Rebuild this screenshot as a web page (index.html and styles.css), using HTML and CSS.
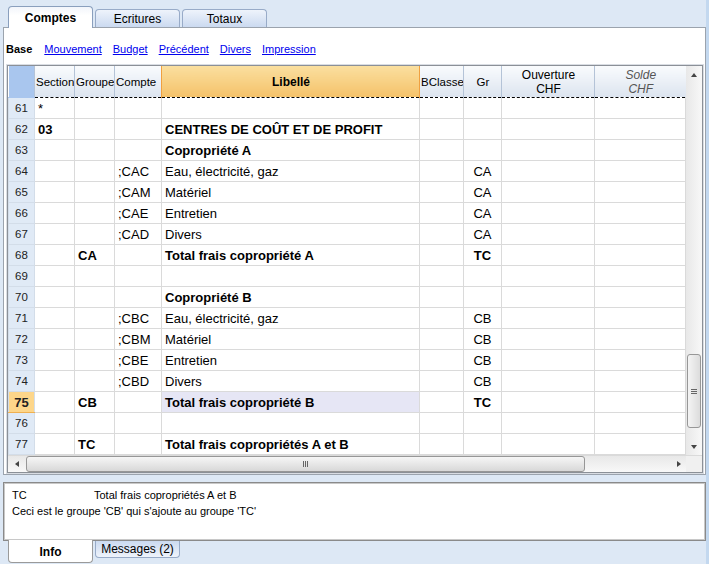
FILE: index.html
```html
<!DOCTYPE html>
<html>
<head>
    <meta charset="utf-8">
    <link rel="stylesheet" href="styles.css">
</head>
<body>
<div class="window">
    <div class="tabs">
        <div class="tab active">Comptes</div>
        <div class="tab">Ecritures</div>
        <div class="tab">Totaux</div>
    </div>

    <div class="panel">
        <div class="views">
            <span class="view current">Base</span>
            <a class="view" href="#">Mouvement</a>
            <a class="view" href="#">Budget</a>
            <a class="view" href="#">Précédent</a>
            <a class="view" href="#">Divers</a>
            <a class="view" href="#">Impression</a>
        </div>

        <div class="grid-frame">
            <div class="grid-main">
                <table class="grid">
                    <colgroup>
                        <col class="c-num"><col class="c-sec"><col class="c-grp"><col class="c-cpt">
                        <col class="c-lib"><col class="c-bcl"><col class="c-gr"><col class="c-ouv"><col class="c-sol">
                    </colgroup>
                    <thead>
                    <tr>
                        <th class="corner"></th>
                        <th class="hd">Section</th>
                        <th class="hd">Groupe</th>
                        <th class="hd">Compte</th>
                        <th class="hd hd-lib">Libellé</th>
                        <th class="hd">BClasse</th>
                        <th class="hd hd-gr">Gr</th>
                        <th class="hd hd-c">Ouverture<br>CHF</th>
                        <th class="hd hd-c hd-it">Solde<br>CHF</th>
                    </tr>
                    </thead>
                    <tbody>
                    <tr><td class="num">61</td><td>*</td><td></td><td></td><td></td><td></td><td></td><td></td><td></td></tr>
                    <tr><td class="num">62</td><td class="b">03</td><td></td><td></td><td class="b">CENTRES DE COÛT ET DE PROFIT</td><td></td><td></td><td></td><td></td></tr>
                    <tr><td class="num">63</td><td></td><td></td><td></td><td class="b">Copropriété A</td><td></td><td></td><td></td><td></td></tr>
                    <tr><td class="num">64</td><td></td><td></td><td>;CAC</td><td>Eau, électricité, gaz</td><td></td><td class="ctr">CA</td><td></td><td></td></tr>
                    <tr><td class="num">65</td><td></td><td></td><td>;CAM</td><td>Matériel</td><td></td><td class="ctr">CA</td><td></td><td></td></tr>
                    <tr><td class="num">66</td><td></td><td></td><td>;CAE</td><td>Entretien</td><td></td><td class="ctr">CA</td><td></td><td></td></tr>
                    <tr><td class="num">67</td><td></td><td></td><td>;CAD</td><td>Divers</td><td></td><td class="ctr">CA</td><td></td><td></td></tr>
                    <tr><td class="num">68</td><td></td><td class="b">CA</td><td></td><td class="b">Total frais copropriété A</td><td></td><td class="ctr b">TC</td><td></td><td></td></tr>
                    <tr><td class="num">69</td><td></td><td></td><td></td><td></td><td></td><td></td><td></td><td></td></tr>
                    <tr><td class="num">70</td><td></td><td></td><td></td><td class="b">Copropriété B</td><td></td><td></td><td></td><td></td></tr>
                    <tr><td class="num">71</td><td></td><td></td><td>;CBC</td><td>Eau, électricité, gaz</td><td></td><td class="ctr">CB</td><td></td><td></td></tr>
                    <tr><td class="num">72</td><td></td><td></td><td>;CBM</td><td>Matériel</td><td></td><td class="ctr">CB</td><td></td><td></td></tr>
                    <tr><td class="num">73</td><td></td><td></td><td>;CBE</td><td>Entretien</td><td></td><td class="ctr">CB</td><td></td><td></td></tr>
                    <tr><td class="num">74</td><td></td><td></td><td>;CBD</td><td>Divers</td><td></td><td class="ctr">CB</td><td></td><td></td></tr>
                    <tr><td class="num sel">75</td><td></td><td class="b">CB</td><td></td><td class="b focus">Total frais copropriété B</td><td></td><td class="ctr b">TC</td><td></td><td></td></tr>
                    <tr><td class="num">76</td><td></td><td></td><td></td><td></td><td></td><td></td><td></td><td></td></tr>
                    <tr><td class="num">77</td><td></td><td class="b">TC</td><td></td><td class="b">Total frais copropriétés A et B</td><td></td><td></td><td></td><td></td></tr>
                    </tbody>
                </table>

                <div class="vscroll">
                    <div class="arrow up"></div>
                    <div class="vtrack">
                        <div class="vthumb"><span class="grip"></span></div>
                    </div>
                    <div class="arrow down"></div>
                </div>
            </div>

            <div class="hscroll">
                <div class="arrow left"></div>
                <div class="hthumb"><span class="grip"></span></div>
                <div class="htrack"></div>
                <div class="arrow right"></div>
                <div class="scroll-corner"></div>
            </div>
        </div>
    </div>

    <div class="info">
        <div class="info-line"><span class="info-key">TC</span>Total frais copropriétés A et B</div>
        <div class="info-line">Ceci est le groupe 'CB' qui s'ajoute au groupe 'TC'</div>
    </div>

    <div class="tabs bottom">
        <div class="tab active">Info</div>
        <div class="tab">Messages (2)</div>
    </div>
</div>
</body>
</html>
```

FILE: styles.css
```css
body {
    margin: 0;
    width: 709px;
    height: 564px;
    overflow: hidden;
    background: #dde8f5;
    font-family: Tahoma, "Liberation Sans", Arial, sans-serif;
    color: #000;
}
.window {
    width: 706px;
    height: 564px;
    border-right: 3px solid #c3d8ef;
}

/* Tabs */
.tabs {
    display: flex;
    align-items: flex-end;
    gap: 2px;
    height: 27px;
    padding-left: 8px;
}
.tab {
    width: 83px;
    height: 17px;
    border: 1px solid #98abc8;
    border-bottom: none;
    border-radius: 4px 4px 0 0;
    background: linear-gradient(#eef3fb, #cbdaf0);
    font-size: 12px;
    text-align: center;
    line-height: 19px;
}
.tab.active {
    height: 21px;
    background: linear-gradient(#f2f5fb, #ffffff 40%);
    border-color: #8a9fbd;
    font-weight: bold;
    line-height: 23px;
    position: relative;
    z-index: 1;
    margin-bottom: -1px;
}
.tabs.bottom {
    align-items: flex-start;
    height: 23px;
}
.tabs.bottom .tab {
    border-top: none;
    border-bottom: 1px solid #98abc8;
    border-radius: 0 0 4px 4px;
    background: linear-gradient(#cbdaf0, #eef3fb);
    height: 16px;
    line-height: 17px;
}
.tabs.bottom .tab.active {
    height: 22px;
    background: #fff;
    border-color: #9a9a9a;
    line-height: 24px;
    margin-top: -1px;
}

/* Main panel */
.panel {
    margin-left: 3px;
    height: 446px;
    background: #fff;
    border: 1px solid #9ba3ad;
}
.views {
    display: flex;
    align-items: center;
    gap: 11px;
    height: 37px;
    padding: 4px 0 0 2px;
    box-sizing: border-box;
    font-size: 11px;
}
.view {
    color: #0000ee;
}
.view.current {
    color: #000;
    font-weight: bold;
    margin-right: 1px;
}

.grid-frame {
    margin-left: 3px;
    width: 694px;
    border: 1px solid #8b9097;
    outline: 1px solid #d9dde3;
}
.grid-main {
    display: flex;
}

/* Grid */
.grid {
    border-collapse: collapse;
    table-layout: fixed;
    width: 677px;
    font-size: 13px;
}
.c-num { width: 26px; }
.c-sec { width: 40px; }
.c-grp { width: 40px; }
.c-cpt { width: 47px; }
.c-lib { width: 258px; }
.c-bcl { width: 44px; }
.c-gr { width: 38px; }
.c-ouv { width: 93px; }
.c-sol { width: 91px; }

.grid th {
    height: 31px;
    padding: 0;
    font-weight: normal;
    font-size: 11.5px;
    border-bottom: 1px dashed #000;
    vertical-align: middle;
}
.grid th.corner {
    background: #a9c6ee;
    border-bottom: 1px solid #a9c6ee;
}
.grid th.hd {
    background: linear-gradient(#f9fbfd, #dce4ef);
    border-left: 1px solid #b4c3d7;
    text-align: left;
    padding-left: 1px;
    white-space: nowrap;
    overflow: hidden;
}
.grid th.hd-gr {
    text-align: center;
}
.grid th.hd-lib {
    background: linear-gradient(#fadf9f, #f5c26a);
    border-left: 1px solid #f0a040;
    border-right: 1px solid #f0a040;
    text-align: center;
    font-weight: bold;
    font-size: 12px;
}
.grid th.hd-c {
    text-align: center;
    line-height: 14px;
    font-size: 12px;
}
.grid th.hd-it {
    font-style: italic;
    color: #555;
}

.grid td {
    height: 20px;
    padding: 0 0 0 3px;
    border: 1px solid #dadada;
    border-top: none;
    white-space: nowrap;
    overflow: hidden;
}
.grid td.num {
    background: #e0eaf6;
    border-color: #d3dde9;
    text-align: center;
    font-size: 11.5px;
    padding: 0;
    color: #222;
}
.grid td.num.sel {
    background: #fdd68a;
    border-bottom-color: #f0b050;
    font-weight: bold;
    font-size: 13px;
}
.grid td.b {
    font-weight: bold;
}
.grid td.ctr {
    text-align: center;
    padding: 0;
}
.grid td.focus {
    background: #e6e6f5;
}

/* Scrollbars */
.vscroll {
    width: 16px;
    display: flex;
    flex-direction: column;
    background: linear-gradient(90deg, #e8e8e8, #f8f8f8);
}
.arrow {
    width: 16px;
    height: 17px;
    position: relative;
}
.arrow::after {
    content: "";
    position: absolute;
    left: 5px;
    top: 6px;
    border: 3px solid transparent;
}
.arrow.up::after {
    top: 4px;
    border-bottom: 4px solid #444;
}
.arrow.down::after {
    top: 7px;
    border-top: 4px solid #444;
}
.arrow.left::after {
    left: 4px;
    top: 5px;
    border-right: 4px solid #444;
}
.arrow.right::after {
    left: 7px;
    top: 5px;
    border-left: 4px solid #444;
}
.vtrack {
    flex: 1;
    display: flex;
    flex-direction: column;
    justify-content: flex-end;
    padding-bottom: 10px;
}
.vthumb {
    height: 72px;
    margin: 0 1px;
    border: 1px solid #979797;
    border-radius: 3px;
    background: linear-gradient(90deg, #f4f4f4, #dcdcdc);
    display: flex;
    align-items: center;
    justify-content: center;
}
.vthumb .grip {
    width: 6px;
    height: 5px;
    background: repeating-linear-gradient(#666 0 1px, transparent 1px 2px);
}
.hscroll {
    display: flex;
    align-items: center;
    height: 16px;
    background: linear-gradient(#e8e8e8, #f8f8f8);
    border-top: 1px solid #dadada;
}
.hscroll .arrow {
    height: 16px;
}
.hthumb {
    width: 557px;
    height: 14px;
    margin-left: 2px;
    border: 1px solid #979797;
    border-radius: 3px;
    background: linear-gradient(#f6f6f6, #d8d8d8);
    display: flex;
    align-items: center;
    justify-content: center;
}
.hthumb .grip {
    width: 5px;
    height: 6px;
    background: repeating-linear-gradient(90deg, #666 0 1px, transparent 1px 2px);
}
.htrack {
    flex: 1;
}
.scroll-corner {
    width: 16px;
    height: 16px;
    background: #f0f0f0;
}

/* Info box */
.info {
    margin: 7px 0 0 3px;
    height: 53px;
    padding: 4px 8px 0;
    background: #fff;
    border: 1px solid #8a8a8a;
    outline: 1px solid #c8c8c8;
    outline-offset: -2px;
    font-size: 11px;
    line-height: 16px;
}
.info-key {
    display: inline-block;
    width: 82px;
}
```
